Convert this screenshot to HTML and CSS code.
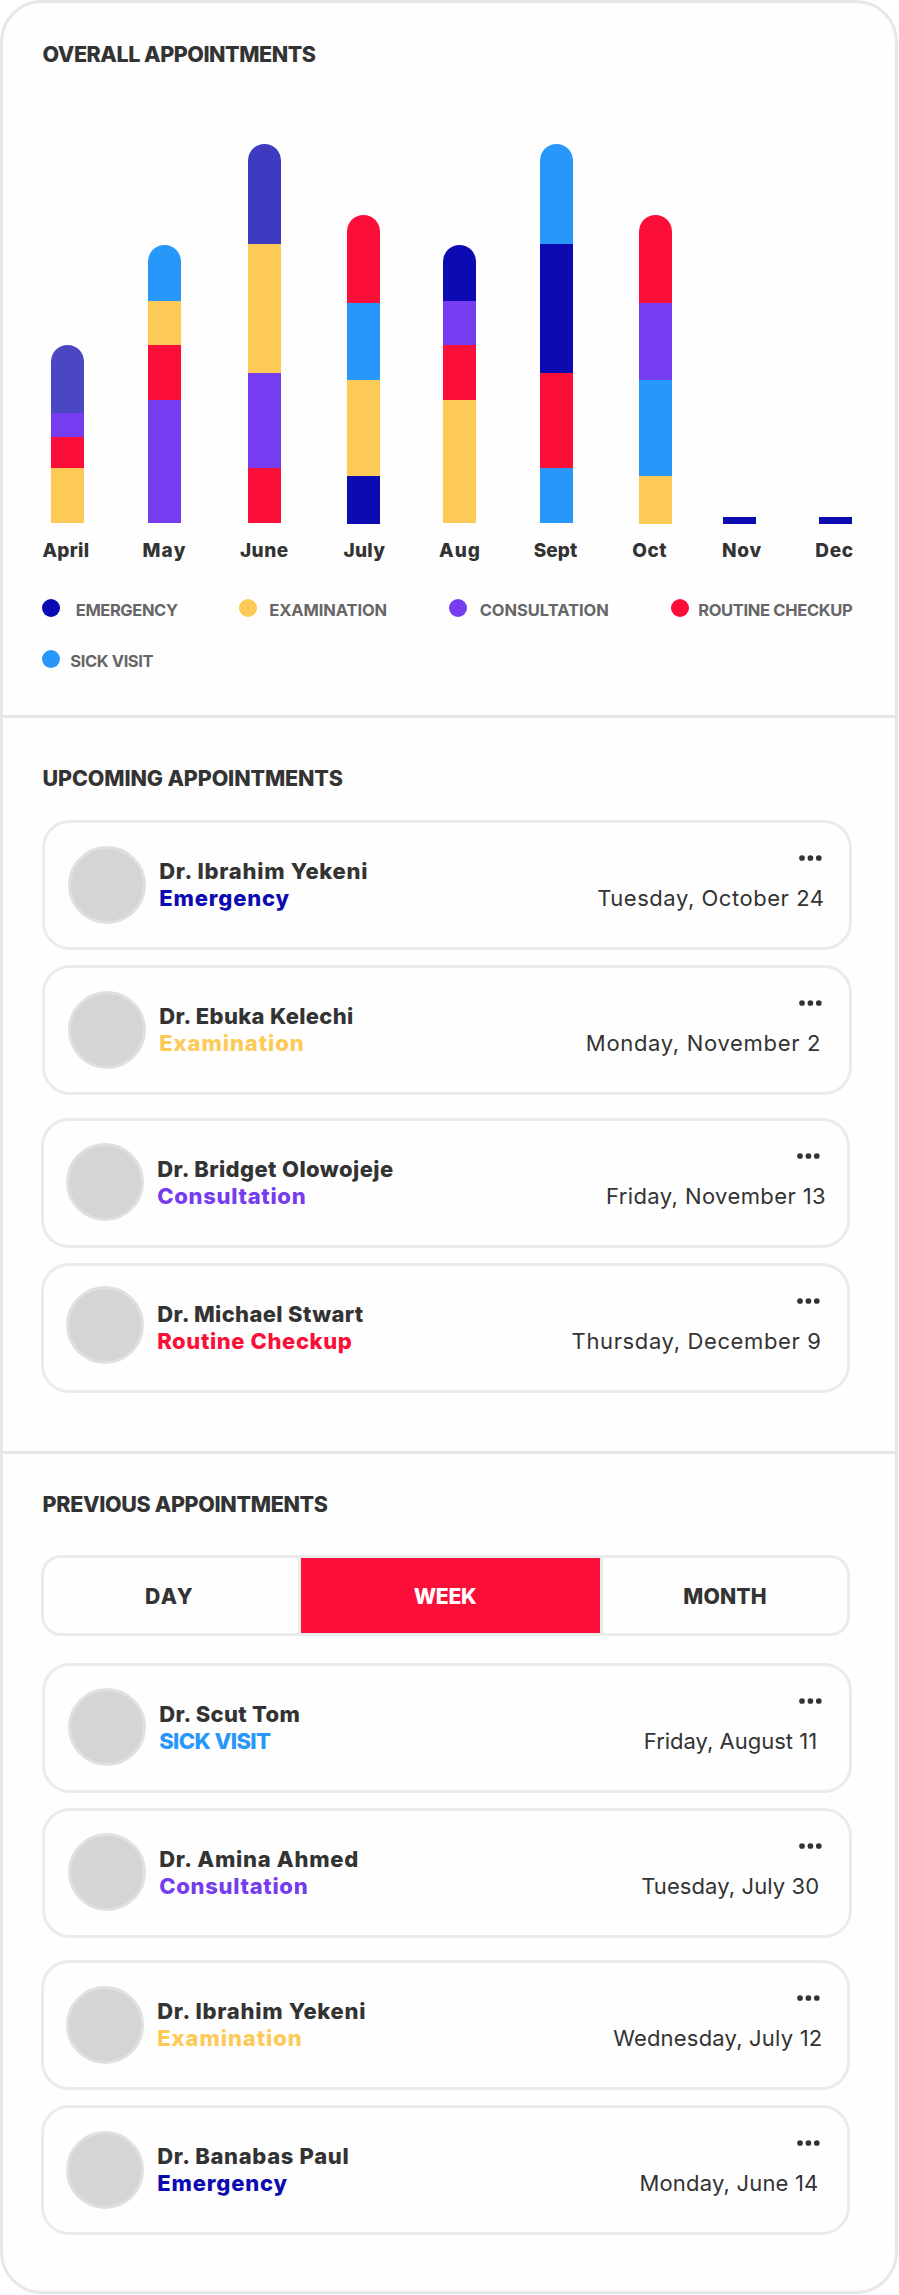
FILE: index.html
```
<!DOCTYPE html>
<html lang="en">
<head>
<meta charset="utf-8">
<title>Appointments</title>
<link rel="stylesheet" href="styles.css">
</head>
<body>
<svg class="defs" width="0" height="0"><symbol id="dots" viewBox="0 0 23 6"><circle cx="3" cy="3" r="2.85"/><circle cx="11.4" cy="3" r="2.85"/><circle cx="19.8" cy="3" r="2.85"/></symbol></svg>
<main class="frame">
  <section class="panel overall">
    <h2 class="title title-overall">OVERALL APPOINTMENTS</h2>
    <div class="chart">
      <div class="bar short"><i class="april-top" style="height:67.5px"></i><i class="purple" style="height:24.5px"></i><i class="red" style="height:30.5px"></i><i class="yellow" style="height:55.5px"></i></div>
      <div class="bar short"><i class="blue" style="height:56px"></i><i class="yellow" style="height:44px"></i><i class="red" style="height:55px"></i><i class="purple" style="height:123px"></i></div>
      <div class="bar short"><i class="june-top" style="height:100px"></i><i class="yellow" style="height:129px"></i><i class="purple" style="height:94.5px"></i><i class="red" style="height:55.5px"></i></div>
      <div class="bar"><i class="red" style="height:88px"></i><i class="blue" style="height:77px"></i><i class="yellow" style="height:96px"></i><i class="navy" style="height:48px"></i></div>
      <div class="bar short"><i class="navy" style="height:56px"></i><i class="purple" style="height:44px"></i><i class="red" style="height:55px"></i><i class="yellow" style="height:123px"></i></div>
      <div class="bar short"><i class="blue" style="height:100px"></i><i class="navy" style="height:129px"></i><i class="red" style="height:94.5px"></i><i class="blue" style="height:55.5px"></i></div>
      <div class="bar"><i class="red" style="height:88px"></i><i class="purple" style="height:77px"></i><i class="blue" style="height:96px"></i><i class="yellow" style="height:48px"></i></div>
      <div class="bar flat"><i class="navy" style="height:7px"></i></div>
      <div class="bar flat"><i class="navy" style="height:7px"></i></div>
    </div>
    <div class="months">
      <span class="m-apr">April</span><span class="m-may">May</span><span class="m-jun">June</span><span class="m-jul">July</span><span class="m-aug">Aug</span><span class="m-sep">Sept</span><span class="m-oct">Oct</span><span class="m-nov">Nov</span><span class="m-dec">Dec</span>
    </div>
    <div class="legend">
      <div class="key k1"><b class="navy"></b><span>EMERGENCY</span></div>
      <div class="key k2"><b class="yellow"></b><span>EXAMINATION</span></div>
      <div class="key k3"><b class="purple"></b><span>CONSULTATION</span></div>
      <div class="key k4"><b class="red"></b><span>ROUTINE CHECKUP</span></div>
      <div class="key k5"><b class="blue"></b><span>SICK VISIT</span></div>
    </div>
  </section>

  <section class="panel upcoming">
    <h2 class="title title-upcoming">UPCOMING APPOINTMENTS</h2>
    <div class="list">
      <article class="card"><div class="avatar"></div><div class="who"><div class="n-ibrahim">Dr. Ibrahim Yekeni</div><div class="t-emergency">Emergency</div></div><div class="when"><svg class="more"><use href="#dots"/></svg><time class="d1">Tuesday, October 24</time></div></article>
      <article class="card"><div class="avatar"></div><div class="who"><div class="n-ebuka">Dr. Ebuka Kelechi</div><div class="t-examination">Examination</div></div><div class="when"><svg class="more"><use href="#dots"/></svg><time class="d2">Monday, November 2</time></div></article>
      <article class="card wide"><div class="avatar"></div><div class="who"><div class="n-bridget">Dr. Bridget Olowojeje</div><div class="t-consultation">Consultation</div></div><div class="when"><svg class="more"><use href="#dots"/></svg><time class="d3">Friday, November 13</time></div></article>
      <article class="card wide raised"><div class="avatar"></div><div class="who"><div class="n-michael">Dr. Michael Stwart</div><div class="t-routine">Routine Checkup</div></div><div class="when"><svg class="more"><use href="#dots"/></svg><time class="d4">Thursday, December 9</time></div></article>
    </div>
  </section>

  <section class="panel previous">
    <h2 class="title title-previous">PREVIOUS APPOINTMENTS</h2>
    <div class="tabs"><div class="tab day">DAY</div><div class="tab week">WEEK</div><div class="tab month">MONTH</div></div>
    <div class="list">
      <article class="card"><div class="avatar"></div><div class="who"><div class="n-scut">Dr. Scut Tom</div><div class="t-sick">SICK VISIT</div></div><div class="when"><svg class="more"><use href="#dots"/></svg><time class="d5">Friday, August 11</time></div></article>
      <article class="card"><div class="avatar"></div><div class="who"><div class="n-amina">Dr. Amina Ahmed</div><div class="t-consultation">Consultation</div></div><div class="when"><svg class="more"><use href="#dots"/></svg><time class="d6">Tuesday, July 30</time></div></article>
      <article class="card wide"><div class="avatar"></div><div class="who"><div class="n-ibrahim">Dr. Ibrahim Yekeni</div><div class="t-examination">Examination</div></div><div class="when"><svg class="more"><use href="#dots"/></svg><time class="d7">Wednesday, July 12</time></div></article>
      <article class="card wide"><div class="avatar"></div><div class="who"><div class="n-banabas">Dr. Banabas Paul</div><div class="t-emergency">Emergency</div></div><div class="when"><svg class="more"><use href="#dots"/></svg><time class="d8">Monday, June 14</time></div></article>
    </div>
  </section>
</main>
</body>
</html>
```
FILE: styles.css
```
* { box-sizing: border-box; }
body {
  margin: 0;
  background: #fff;
  color: #333;
  font-family: Inter, "Liberation Sans", sans-serif;
}
.defs { display: block; }

.frame {
  width: 898px;
  height: 2294px;
  border: 3px solid #e7e7e7;
  border-radius: 42px;
  background: #fefefe;
}
.panel { padding-left: 39px; }
.overall { height: 715px; padding-top: 38px; border-bottom: 3px solid #e7e7e7; }
.upcoming { height: 736px; padding-top: 47px; border-bottom: 3px solid #e7e7e7; }
.previous { padding-top: 37px; }

.title { margin: 0 0 0 0.6px; font-size: 21.5px; line-height: 26px; font-weight: 800; }
.title-overall { letter-spacing: -0.46px; }
.title-upcoming { letter-spacing: -0.13px; }
.title-previous { letter-spacing: -0.34px; }

/* series colours */
.navy { background: #0c0ab1; }
.yellow { background: #fdca57; }
.purple { background: #763cef; }
.red { background: #fb0e37; }
.blue { background: #2797fa; }
.april-top { background: #4b46c1; }
.june-top { background: #3f3bc0; }

/* stacked bars */
.chart {
  display: grid;
  grid-template-columns: 97px 100px 99px 96px 97px 99px 84px 96px 33px;
  align-items: end;
  height: 380px;
  margin: 77px 0 0 9px;
}
.bar { width: 33px; border-radius: 16.5px 16.5px 0 0; overflow: hidden; }
.bar i { display: block; }
.short { margin-bottom: 1px; }
.flat { border-radius: 0; }

.months {
  display: grid;
  grid-template-columns: 100px 97.5px 103.5px 95.7px 94.6px 98.7px 89.7px 93.3px auto;
  margin: 15px 0 0 0.4px;
  font-size: 19px;
  line-height: 24px;
  font-weight: 800;
}
.m-apr { letter-spacing: 0.3px; }
.m-may { letter-spacing: 1.3px; }
.m-jun { letter-spacing: 0.5px; }
.m-jul { letter-spacing: 0.3px; }
.m-aug { letter-spacing: 1px; }
.m-sep { letter-spacing: 0.1px; }
.m-oct { letter-spacing: 0.5px; }
.m-nov { letter-spacing: 0.7px; }
.m-dec { letter-spacing: 0.6px; }

.legend {
  display: grid;
  grid-template-columns: 197px 209.7px 222px auto;
  row-gap: 33px;
  margin-top: 36px;
  color: #666;
  font-size: 16.5px;
  line-height: 22px;
  font-weight: 700;
}
.key { display: flex; height: 18px; white-space: nowrap; }
.key b { width: 18px; height: 18px; border-radius: 50%; }
.k1 { gap: 15.8px; letter-spacing: -0.42px; }
.k2 { gap: 12.3px; letter-spacing: -0.1px; }
.k3 { gap: 13px; letter-spacing: -0.04px; }
.k4 { gap: 9.5px; letter-spacing: -0.33px; }
.k5 { gap: 10.3px; letter-spacing: -0.4px; }

/* appointment cards */
.list { display: flex; flex-direction: column; gap: 15px; }
.upcoming .list { margin-top: 29px; }
.previous .list { margin-top: 27px; }
.card {
  display: flex;
  width: 810px;
  height: 130px;
  padding-left: 23px;
  border: 3px solid #ebebeb;
  border-radius: 28px;
  font-size: 22px;
  line-height: 27px;
  white-space: nowrap;
}
.card.wide { width: 809px; margin-left: -1px; padding-left: 22px; }
.upcoming .card:nth-child(3) { margin-top: 8px; }
.previous .card:nth-child(3) { margin-top: 7px; }
.avatar {
  width: 78px;
  height: 78px;
  margin: 23px 13.2px 0 0;
  border: 3px solid #e0e0e0;
  border-radius: 50%;
  background: #d5d5d5;
}
.upcoming .wide .avatar { margin-top: 22px; }
.upcoming .raised .avatar { margin-top: 20px; }
.previous .card:nth-child(-n+2) .avatar { margin-top: 22px; }
.who { padding-top: 35px; font-weight: 800; }
.when { display: flex; flex-direction: column; align-items: flex-end; margin-left: auto; padding-top: 32px; }
.more { width: 23px; height: 6px; margin: 0 26.8px 24px 0; fill: #333; }

.n-ibrahim { letter-spacing: 0.73px; }
.n-ebuka { letter-spacing: 0.32px; }
.n-bridget { letter-spacing: 0.4px; }
.n-michael { letter-spacing: 0.35px; }
.n-scut { letter-spacing: 0.3px; }
.n-amina { letter-spacing: 0.7px; }
.n-banabas { letter-spacing: 0.66px; }
.t-emergency { color: #0c0ab1; letter-spacing: 0.85px; }
.t-examination { color: #fdca57; letter-spacing: 0.95px; }
.t-consultation { color: #763cef; letter-spacing: 0.7px; }
.t-routine { color: #fb0e37; letter-spacing: 0.6px; }
.t-sick { color: #2797fa; letter-spacing: -0.6px; }

.d1 { margin-right: 24.5px; letter-spacing: 0.54px; }
.d2 { margin-right: 27.9px; letter-spacing: 0.68px; }
.d3 { margin-right: 20.9px; letter-spacing: 0.41px; }
.d4 { margin-right: 25.5px; letter-spacing: 0.63px; }
.d5 { margin-right: 31.9px; letter-spacing: 0; }
.d6 { margin-right: 29.8px; letter-spacing: 0.1px; }
.d7 { margin-right: 24.6px; letter-spacing: 0.2px; }
.d8 { margin-right: 28.5px; letter-spacing: 0.19px; }

/* range switch */
.tabs {
  display: grid;
  grid-template-columns: 254px 305px 1fr;
  width: 809px;
  height: 81px;
  margin: 38px 0 0 -1px;
  border: 3px solid #ebebeb;
  border-radius: 20px;
  font-size: 21.2px;
  line-height: 26px;
  font-weight: 800;
  text-align: center;
}
.tab { padding-top: 25px; }
.day { padding-right: 3px; letter-spacing: 1.4px; }
.week {
  padding-right: 11px;
  border: solid #ebebeb;
  border-width: 0 3px;
  background: #fb0e37;
  color: #fff;
  letter-spacing: -0.4px;
}
.month { letter-spacing: 0.1px; }
```
